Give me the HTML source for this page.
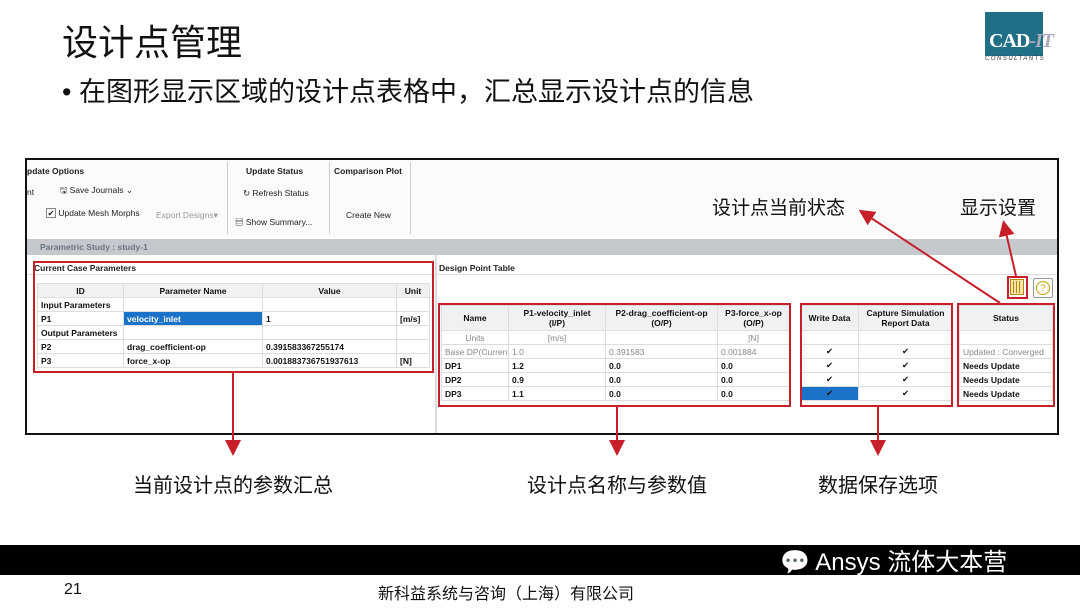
<!DOCTYPE html>
<html><head><meta charset="utf-8"><style>
*{margin:0;padding:0;box-sizing:border-box}
body{width:1080px;height:608px;background:#fff;position:relative;overflow:hidden;font-family:"Liberation Sans","Noto Sans CJK SC",sans-serif}
.a{position:absolute}
.t{font-size:8.5px;color:#222;white-space:nowrap}
.b{font-weight:bold}
.cn{font-family:"Liberation Sans","Noto Sans CJK SC",sans-serif;color:#111;white-space:nowrap}
table{border-collapse:collapse;position:absolute;font-size:8.5px;font-family:"Liberation Sans","DejaVu Sans",sans-serif;table-layout:fixed}
td{border:1px solid #ddd;padding:0 3px;height:14px;white-space:nowrap;color:#111;overflow:hidden}
.h td{background:#f0f1f3;font-weight:bold;text-align:center}
.g td{color:#888}
.rb{position:absolute;border:2px solid #c8202a}
</style></head><body>
<div class="a cn" style="left:62px;top:14px;font-size:36px">设计点管理</div>
<div class="a cn" style="left:62px;top:70px;font-size:27px">• 在图形显示区域的设计点表格中，汇总显示设计点的信息</div>
<!-- logo -->
<div class="a" style="left:985px;top:12px;width:58px;height:44px;background:#1f6f86"></div>
<div class="a" style="left:989px;top:30px;font:bold 20px 'Liberation Serif',serif;color:#fff;letter-spacing:-1px">CAD<span style="color:#aab;font-style:italic">-IT</span></div>
<div class="a" style="left:985px;top:56px;font:italic 6px 'Liberation Sans';color:#334;letter-spacing:1.5px">CONSULTANTS</div>

<!-- screenshot frame -->
<div class="a" style="left:25px;top:158px;width:1034px;height:277px;border:2px solid #111;background:#fff"></div>
<div class="a" style="left:27px;top:160px;width:1030px;height:77px;background:#fbfbfb"></div>
<div class="a" style="left:227px;top:162px;width:1px;height:72px;background:#ccc"></div>
<div class="a" style="left:329px;top:162px;width:1px;height:72px;background:#ccc"></div>
<div class="a" style="left:410px;top:162px;width:1px;height:72px;background:#ccc"></div>
<div class="a t b" style="left:27px;top:166px">pdate Options</div>
<div class="a t b" style="left:246px;top:166px">Update Status</div>
<div class="a t b" style="left:334px;top:166px">Comparison Plot</div>
<div class="a t" style="left:27px;top:187px">nt</div>
<div class="a t" style="left:60px;top:185px">🖫 Save Journals ⌄</div>
<div class="a t" style="left:46px;top:208px"><span style="display:inline-block;width:10px;height:10px;border:1px solid #888;font-size:8px;line-height:9px;text-align:center">✔</span> Update Mesh Morphs</div>
<div class="a t" style="left:156px;top:210px;color:#999">Export Designs▾</div>
<div class="a t" style="left:243px;top:188px">↻ Refresh Status</div>
<div class="a t" style="left:235px;top:216px">▤ Show Summary...</div>
<div class="a t" style="left:346px;top:210px">Create New</div>
<div class="a" style="left:27px;top:239px;width:1030px;height:16px;background:#c5c9ce"></div>
<div class="a t b" style="left:40px;top:242px;color:#6a7480">Parametric Study : study-1</div>
<div class="a" style="left:435px;top:255px;width:2px;height:178px;background:#ddd"></div>
<div class="a t b" style="left:34px;top:263px">Current Case Parameters</div>
<div class="a t b" style="left:439px;top:263px">Design Point Table</div>
<div class="a" style="left:27px;top:274px;width:408px;height:1px;background:#ddd"></div>
<div class="a" style="left:437px;top:274px;width:620px;height:1px;background:#ddd"></div>

<table style="left:37px;top:283px;width:393px">
<tr class="h"><td style="width:86px">ID</td><td style="width:139px">Parameter Name</td><td style="width:134px">Value</td><td>Unit</td></tr>
<tr><td style="font-weight:bold">Input Parameters</td><td></td><td></td><td></td></tr>
<tr><td style="font-weight:bold">P1</td><td style="background:#1a73c8;color:#fff;font-weight:bold">velocity_inlet</td><td style="font-weight:bold">1</td><td style="font-weight:bold">[m/s]</td></tr>
<tr><td style="font-weight:bold">Output Parameters</td><td></td><td></td><td></td></tr>
<tr><td style="font-weight:bold">P2</td><td style="font-weight:bold">drag_coefficient-op</td><td style="font-weight:bold">0.391583367255174</td><td></td></tr>
<tr><td style="font-weight:bold">P3</td><td style="font-weight:bold">force_x-op</td><td style="font-weight:bold">0.001883736751937613</td><td style="font-weight:bold">[N]</td></tr>
</table>

<table style="left:441px;top:305px;width:612px">
<tr class="h" style="height:25px"><td style="width:67px">Name</td><td style="width:97px">P1-velocity_inlet<br>(I/P)</td><td style="width:112px">P2-drag_coefficient-op<br>(O/P)</td><td style="width:72px">P3-force_x-op<br>(O/P)</td><td style="width:11px;background:#fff;border:none"></td><td style="width:58px">Write Data</td><td style="width:94px">Capture Simulation<br>Report Data</td><td style="width:6px;background:#fff;border:none"></td><td>Status</td></tr>
<tr class="g"><td style="text-align:center">Units</td><td style="text-align:center">[m/s]</td><td></td><td style="text-align:center">[N]</td><td style="border:none"></td><td></td><td></td><td style="border:none"></td><td></td></tr>
<tr class="g"><td>Base DP(Current)</td><td>1.0</td><td>0.391583</td><td>0.001884</td><td style="border:none"></td><td style="text-align:center;color:#111">✔</td><td style="text-align:center;color:#111">✔</td><td style="border:none"></td><td>Updated : Converged</td></tr>
<tr style="font-weight:bold"><td>DP1</td><td>1.2</td><td>0.0</td><td>0.0</td><td style="border:none"></td><td style="text-align:center">✔</td><td style="text-align:center">✔</td><td style="border:none"></td><td>Needs Update</td></tr>
<tr style="font-weight:bold"><td>DP2</td><td>0.9</td><td>0.0</td><td>0.0</td><td style="border:none"></td><td style="text-align:center">✔</td><td style="text-align:center">✔</td><td style="border:none"></td><td>Needs Update</td></tr>
<tr style="font-weight:bold"><td>DP3</td><td>1.1</td><td>0.0</td><td>0.0</td><td style="border:none"></td><td style="text-align:center;background:#1a73c8">✔</td><td style="text-align:center">✔</td><td style="border:none"></td><td>Needs Update</td></tr>
</table>

<!-- icons -->
<div class="a" style="left:1010px;top:279px;width:14px;height:16px;border:1px solid #b8860b;background:#f5e6a8"></div>
<div class="a" style="left:1013px;top:281px;width:1px;height:12px;background:#b8860b"></div>
<div class="a" style="left:1016px;top:281px;width:1px;height:12px;background:#b8860b"></div>
<div class="a" style="left:1019px;top:281px;width:1px;height:12px;background:#b8860b"></div>
<div class="a" style="left:1033px;top:278px;width:20px;height:20px;border:1px solid #999;border-radius:2px;background:#fff"></div>
<div class="a" style="left:1036px;top:281px;width:14px;height:14px;border:1px solid #c8a000;border-radius:50%;font-size:9px;line-height:12px;text-align:center;color:#c8a000">?</div>

<!-- red boxes -->
<div class="rb" style="left:33px;top:261px;width:401px;height:112px"></div>
<div class="rb" style="left:438px;top:303px;width:353px;height:104px"></div>
<div class="rb" style="left:800px;top:303px;width:153px;height:104px"></div>
<div class="rb" style="left:957px;top:303px;width:98px;height:104px"></div>
<div class="rb" style="left:1007px;top:276px;width:21px;height:23px"></div>

<svg class="a" style="left:0;top:0" width="1080" height="608">
<defs><marker id="m" markerWidth="8" markerHeight="8" refX="6" refY="4" orient="auto"><path d="M0,0 L8,4 L0,8 z" fill="#c8202a"/></marker></defs>
<g stroke="#c8202a" stroke-width="2" fill="none">
<line x1="233" y1="373" x2="233" y2="452" marker-end="url(#m)"/>
<line x1="617" y1="407" x2="617" y2="452" marker-end="url(#m)"/>
<line x1="878" y1="407" x2="878" y2="452" marker-end="url(#m)"/>
<line x1="1000" y1="303" x2="862" y2="212" marker-end="url(#m)"/>
<line x1="1016" y1="276" x2="1004" y2="224" marker-end="url(#m)"/>
</g></svg>

<div class="a cn" style="left:712px;top:193px;font-size:19px">设计点当前状态</div>
<div class="a cn" style="left:960px;top:193px;font-size:19px">显示设置</div>
<div class="a cn" style="left:133px;top:469px;font-size:20px">当前设计点的参数汇总</div>
<div class="a cn" style="left:527px;top:469px;font-size:20px">设计点名称与参数值</div>
<div class="a cn" style="left:818px;top:469px;font-size:20px">数据保存选项</div>

<div class="a" style="left:0;top:545px;width:1080px;height:30px;background:#000"></div>
<div class="a" style="left:780px;top:542px;font-size:24px;color:#fff;white-space:nowrap">💬 Ansys 流体大本营</div>
<div class="a" style="left:64px;top:581px;font-size:16px;color:#111">21</div>
<div class="a cn" style="left:378px;top:580px;font-size:16px">新科益系统与咨询（上海）有限公司</div>
</body></html>
